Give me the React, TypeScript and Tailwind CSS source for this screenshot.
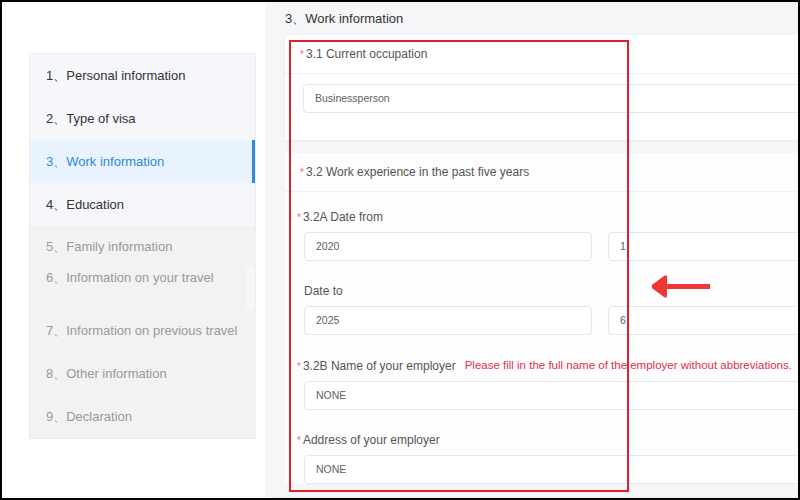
import React from 'react';

const FONT = { fontFamily: '"Liberation Sans", Arial, sans-serif' };

const TOP_STEPS = [
  { n: 1, label: 'Personal information' },
  { n: 2, label: 'Type of visa' },
  { n: 3, label: 'Work information', active: true },
  { n: 4, label: 'Education' },
];

function Step({ n, label, active }: { n: number; label: string; active?: boolean }) {
  return (
    <div
      className={`relative flex h-[43px] items-center pl-4 text-[13px] ${
        active ? 'bg-[#e8f3fd] text-[#2f88dd]' : 'text-[#333]'
      }`}
    >
      {n}、{label}
      {active && <span className="absolute right-0 top-0 h-full w-[3px] bg-[#2f88dd]" />}
    </div>
  );
}

function Req() {
  return <span className="mr-[2px] text-[10px] text-[#f56c6c]">*</span>;
}

function Input({ value, className = '' }: { value: string; className?: string }) {
  return (
    <div
      className={`flex h-[29px] items-center rounded-[4px] border border-[#e4e7ed] bg-white pl-[11px] text-[10.5px] text-[#606266] ${className}`}
    >
      {value}
    </div>
  );
}

function FieldLabel({ children, required }: { children: React.ReactNode; required?: boolean }) {
  return (
    <div className={`mb-[7px] flex h-4 items-center text-[12px] text-[#555] ${required ? '-ml-[7px]' : ''}`}>
      {required && <Req />}
      {children}
    </div>
  );
}

export default function App() {
  return (
    <div
      className="relative flex h-[500px] w-[800px] overflow-hidden border-2 border-black bg-white"
      style={FONT}
    >
      {/* left steps */}
      <div className="w-[263px] shrink-0 pl-[27px] pt-[51px]">
        <div className="w-[227px] border border-[#eceef2] bg-[#f5f7fa]">
          {TOP_STEPS.map((s) => (
            <Step key={s.n} {...s} />
          ))}
          <div className="relative bg-[#f2f2f3] pb-[11px] pl-4 pt-[11px] text-[13px] leading-5 text-[#999]">
            <div>5、Family information</div>
            <div className="mt-[11px]">6、Information on your travel</div>
            <div className="mt-[33px]">7、Information on previous travel</div>
            <div className="mt-[23px]">8、Other information</div>
            <div className="mt-[23px]">9、Declaration</div>
            <span className="absolute right-0 top-[42px] h-[40px] w-[9px] bg-[#f6f7f9]" />
          </div>
        </div>
      </div>

      {/* right form */}
      <div className="min-w-0 flex-1 bg-[#f5f6f8] pl-5">
        <div className="flex h-[33px] items-center text-[13px] text-[#333]">3、Work information</div>

        <div className="w-[560px] bg-white shadow-[0_1px_4px_rgba(0,0,0,0.06)]">
          <div className="flex h-[39px] items-center border-b border-[#eef0f3] pl-[15px] text-[12px] text-[#555]">
            <Req />
            3.1 Current occupation
          </div>
          <div className="pb-[27px] pl-[18px] pt-[10px]">
            <Input value="Businessperson" />
          </div>
        </div>

        <div className="mt-[13px] w-[560px] bg-[#fdfdfd]">
          <div className="flex h-[39px] items-center border-b border-[#eef0f3] pl-[15px] text-[12px] text-[#555]">
            <Req />
            3.2 Work experience in the past five years
          </div>
          <div className="pl-[19px] pt-[17px]">
            <FieldLabel required>3.2A Date from</FieldLabel>
            <div className="mb-[22px] flex gap-4">
              <Input value="2020" className="w-[288px]" />
              <Input value="1" className="flex-1" />
            </div>
            <FieldLabel>Date to</FieldLabel>
            <div className="mb-[23px] flex gap-4">
              <Input value="2025" className="w-[288px]" />
              <Input value="6" className="flex-1" />
            </div>
            <FieldLabel required>
              3.2B Name of your employer
              <span className="ml-[9px] whitespace-nowrap text-[11.5px] text-[#e0304e]">
                Please fill in the full name of the employer without abbreviations.
              </span>
            </FieldLabel>
            <Input value="NONE" className="mb-[22px]" />
            <FieldLabel required>Address of your employer</FieldLabel>
            <Input value="NONE" />
          </div>
        </div>
      </div>

      {/* annotation overlay */}
      <div className="pointer-events-none absolute left-[287px] top-[38px] h-[452px] w-[340px] border-2 border-[#e41e26]" />
      <svg className="absolute left-[645px] top-[271px]" width="66" height="26" viewBox="0 0 66 26">
        <path d="M20 11 L63 11 L63 16 L20 16 Z" fill="#f03535" />
        <path
          d="M5 13.5 Q4 12.5 5.5 11.5 L17 3 Q20 1 20 4.5 L20 22.5 Q20 26 17 24 L5.5 15.5 Q4 14.5 5 13.5 Z"
          fill="#f03535"
        />
      </svg>
    </div>
  );
}
